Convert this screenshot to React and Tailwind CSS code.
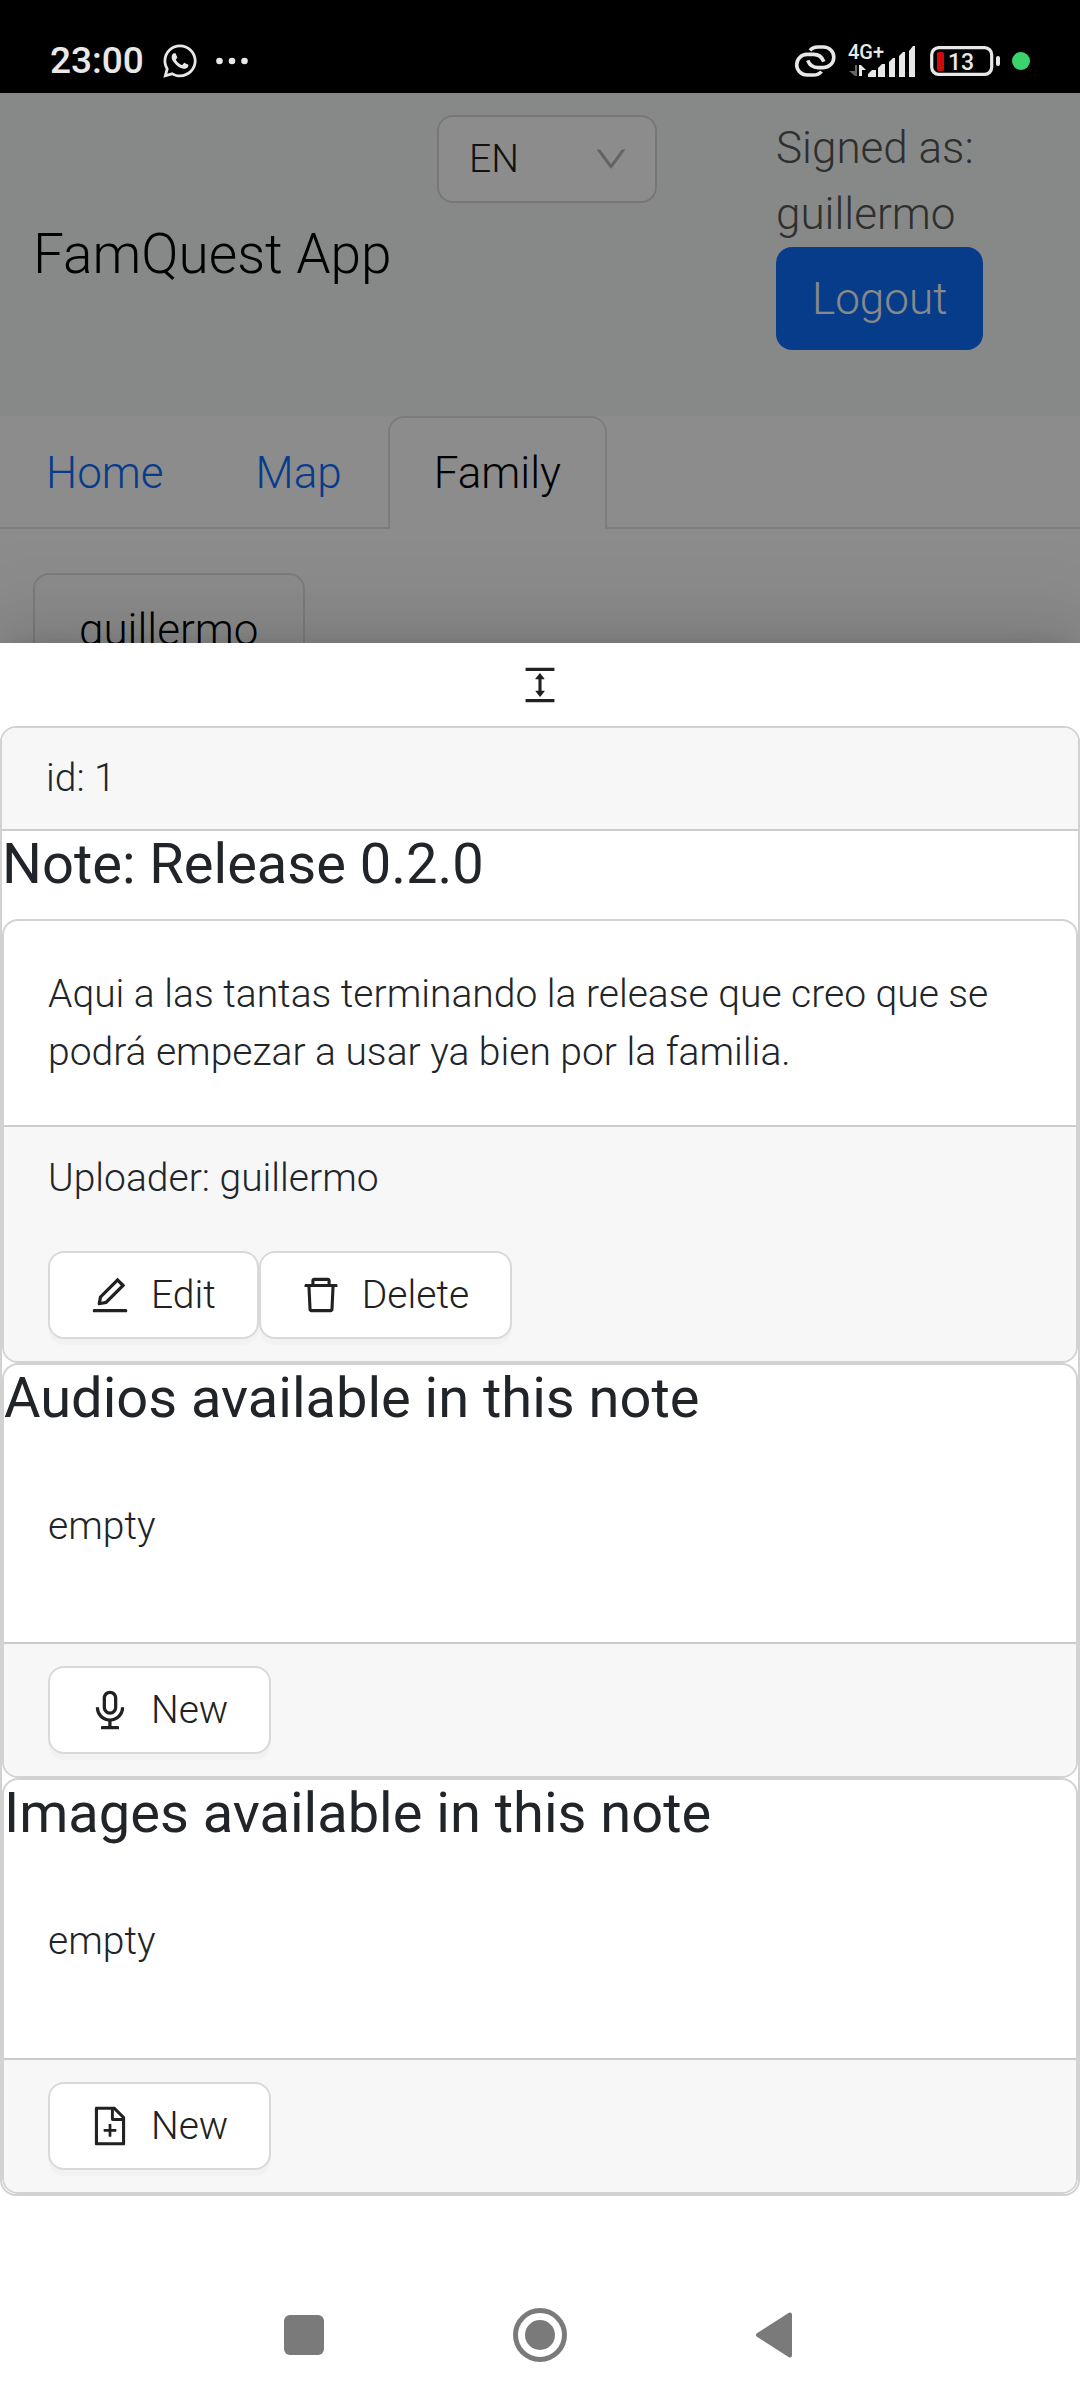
import {
  AiOutlineAudio,
  AiOutlineColumnHeight,
  AiOutlineDelete,
  AiOutlineDown,
  AiOutlineEdit,
  AiOutlineFileAdd,
} from "react-icons/ai";
import { FaWhatsapp } from "react-icons/fa6";

function StatusBar() {
  return (
    <div className="flex h-[93px] items-center justify-between bg-black pt-[28px] pr-[50px] pl-[50px] text-[#e8e8e8]">
      <div className="flex items-center">
        <span className="text-[37px] leading-[64px] font-medium">23:00</span>
        <FaWhatsapp className="ml-[17px] size-[38px]" />
        <svg className="ml-[17px] h-2 w-8" viewBox="0 0 32 8" fill="currentColor" aria-hidden="true">
          <circle cx="3.500" cy="4" r="3.300" />
          <circle cx="16" cy="4" r="3.300" />
          <circle cx="28.500" cy="4" r="3.300" />
        </svg>
      </div>
      <div className="flex items-center">
        <svg className="h-[34px] w-[43px]" viewBox="0 0 43 34" fill="none" stroke="currentColor" strokeWidth="3.600" aria-hidden="true">
          <path d="M16 6.500C18 4 20.500 3 24 3h5.500a10.300 10.300 0 0 1 0 20.600H24c-5 0-8.500-2.600-10.300-7.200" />
          <path d="M27.500 27.500C25.500 30 23 31 19.500 31H13a10.300 10.300 0 0 1 0-20.600h6.500c5 0 8.500 2.600 10.300 7.200" />
        </svg>
        <svg className="ml-[10px] h-11 w-[71px]" viewBox="0 0 71 44" fill="currentColor" aria-hidden="true">
          <text x="1" y="20" fontSize="20" fontWeight="500">4G+</text>
          <path d="M8 26h2v11H8l-6-5h6z" fill="#666" />
          <path d="M12 37V26h2l5 5h-4v6z" />
          <path d="M21 38v-3l4-4h4v7zM31 38V29l4-4h3v13zM42 38V23l4-4h2v19zM52 38V17l4-4h2v25zM62 38V12l4-5h2v31z" />
        </svg>
        <svg className="ml-[12px] h-[30px] w-[70px]" viewBox="0 0 70 30" aria-hidden="true">
          <rect x="1.700" y="1.700" width="60" height="26.600" rx="7" fill="none" stroke="currentColor" strokeWidth="3.200" />
          <rect x="66" y="10" width="4" height="10" rx="2" fill="currentColor" />
          <rect x="7" y="6" width="7" height="19" rx="2" fill="#cf0a0a" />
          <text x="18" y="24" fontSize="23" fontWeight="500" fill="currentColor">13</text>
        </svg>
        <span className="ml-[12px] size-[18px] rounded-full bg-[#3bd46c]" />
      </div>
    </div>
  );
}

function Header() {
  return (
    <header className="grid grid-cols-[404fr_339fr_271fr] bg-[#f5faf7] px-[33px] pt-[22px] pb-[66px]">
      <a href="#home" className="mt-[43px] self-center text-[55px] leading-[82px] whitespace-nowrap text-black">
        FamQuest App
      </a>
      <div className="relative w-[220px] self-start">
        <select
          aria-label="Language"
          className="h-[88px] w-full appearance-none rounded-[16px] border-2 border-[#d9d9d9] bg-white pl-[30px] text-[39px] text-[#212121]"
        >
          <option>EN</option>
          <option>ES</option>
        </select>
        <AiOutlineDown className="pointer-events-none absolute top-[25px] right-[27px] size-[38px] text-[#b5b5b5]" />
      </div>
      <div className="text-[44px] leading-[66px] text-[#565656]">
        <p>Signed as:</p>
        <p>guillermo</p>
        <button type="button" className="rounded-[16px] bg-[#0d6efd] px-[36px] pt-[19px] pb-[18px] text-[#f8f9fa]">
          Logout
        </button>
      </div>
    </header>
  );
}

function Page() {
  return (
    <div className="overflow-hidden bg-white [contain:size] [grid-area:1/1]">
      <Header />
      <nav className="flex border-b-2 border-[#dee2e6] text-[44px] leading-[66px] text-[#0d6efd]">
        <a href="#home" className="px-[46px] pt-[24px] pb-[21px]">Home</a>
        <a href="#map" className="px-[46px] pt-[24px] pb-[21px]">Map</a>
        <a
          href="#family"
          aria-current="page"
          className="-mb-0.5 rounded-t-[16px] border-2 border-b-0 border-[#dee2e6] bg-white px-[44px] pt-[22px] pb-[23px] text-black"
        >
          Family
        </a>
      </nav>
      <div className="px-[33px] pt-[44px]">
        <a
          href="#guillermo"
          className="inline-block rounded-t-[16px] border-2 border-[#dee2e6] px-[44px] py-[22px] text-[44px] leading-[66px] text-black"
        >
          guillermo
        </a>
      </div>
    </div>
  );
}

function ActionButton({ icon: Icon, children }) {
  return (
    <button
      type="button"
      className="flex h-[88px] items-center gap-[19px] rounded-[16px] border-2 border-[#d9d9d9] bg-white pr-[41px] pl-[38px] text-[39px] text-[#212121] shadow-[0_6px_0_rgba(0,0,0,0.02)]"
    >
      <Icon className="size-11" />
      {children}
    </button>
  );
}

function Card({ title, children, footer }) {
  return (
    <section className="overflow-hidden rounded-[16px] border-2 border-[#d2d2d2] bg-white">
      {title && <CardTitle>{title}</CardTitle>}
      <div className="p-[44px]">{children}</div>
      <footer className="border-t-2 border-[#ccc] bg-[#f7f7f7] px-[44px] py-[22px]">{footer}</footer>
    </section>
  );
}

function CardTitle({ children }) {
  return <h2 className="mb-[22px] text-[56px] leading-[66px] font-normal">{children}</h2>;
}

function Drawer() {
  return (
    <div
      role="dialog"
      aria-label="Note"
      className="relative mt-[550px] bg-white pb-[74px] text-[39px] leading-[58px] text-[#212529] shadow-[0_-16px_44px_rgba(0,0,0,0.08),0_-8px_16px_-11px_rgba(0,0,0,0.12),0_-25px_77px_22px_rgba(0,0,0,0.05)] [grid-area:1/1]"
    >
      <button type="button" aria-label="Resize" className="flex h-[83px] w-full items-center justify-center text-[#212121]">
        <AiOutlineColumnHeight className="size-11" />
      </button>
      <article className="overflow-hidden rounded-[16px] border-2 border-[#d2d2d2]">
        <header className="border-b-2 border-[#ccc] bg-[#f7f7f7] px-[44px] pt-[21px] pb-[22px]">id: 1</header>
        <CardTitle>Note: Release 0.2.0</CardTitle>
        <Card
          footer={
            <>
              <p className="mb-[44px]">Uploader: guillermo</p>
              <div className="flex">
                <ActionButton icon={AiOutlineEdit}>Edit</ActionButton>
                <ActionButton icon={AiOutlineDelete}>Delete</ActionButton>
              </div>
            </>
          }
        >
          <p>Aqui a las tantas terminando la release que creo que se podrá empezar a usar ya bien por la familia.</p>
        </Card>
        <Card
          title="Audios available in this note"
          footer={
            <div className="flex">
              <ActionButton icon={AiOutlineAudio}>New</ActionButton>
            </div>
          }
        >
          <p className="mb-[43px]">empty</p>
        </Card>
        <Card
          title="Images available in this note"
          footer={
            <div className="flex">
              <ActionButton icon={AiOutlineFileAdd}>New</ActionButton>
            </div>
          }
        >
          <p className="mb-[44px]">empty</p>
        </Card>
      </article>
    </div>
  );
}

function SystemNav() {
  return (
    <nav className="flex h-[130px] items-center justify-center bg-white text-[#7a7a7a]">
      <button type="button" aria-label="Recent apps" className="flex w-[236px] justify-center">
        <svg className="size-10" viewBox="0 0 40 40" fill="currentColor">
          <rect width="40" height="40" rx="6" />
        </svg>
      </button>
      <button type="button" aria-label="Home" className="flex w-[236px] justify-center">
        <svg className="size-[54px]" viewBox="0 0 54 54">
          <circle cx="27" cy="27" r="24.500" fill="none" stroke="currentColor" strokeWidth="5" />
          <circle cx="27" cy="27" r="15" fill="currentColor" />
        </svg>
      </button>
      <button type="button" aria-label="Back" className="flex w-[236px] justify-center">
        <svg className="h-[46px] w-10" viewBox="0 0 40 46" fill="currentColor" stroke="currentColor" strokeWidth="4" strokeLinejoin="round">
          <path d="M34 2.500v41L2 23z" />
        </svg>
      </button>
    </nav>
  );
}

export default function App() {
  return (
    <div className="flex min-h-screen flex-col bg-white font-['Roboto',sans-serif] font-light">
      <StatusBar />
      <main className="grid flex-1 overflow-hidden">
        <Page />
        <div className="relative bg-black/45 [grid-area:1/1]" />
        <Drawer />
      </main>
      <SystemNav />
    </div>
  );
}
